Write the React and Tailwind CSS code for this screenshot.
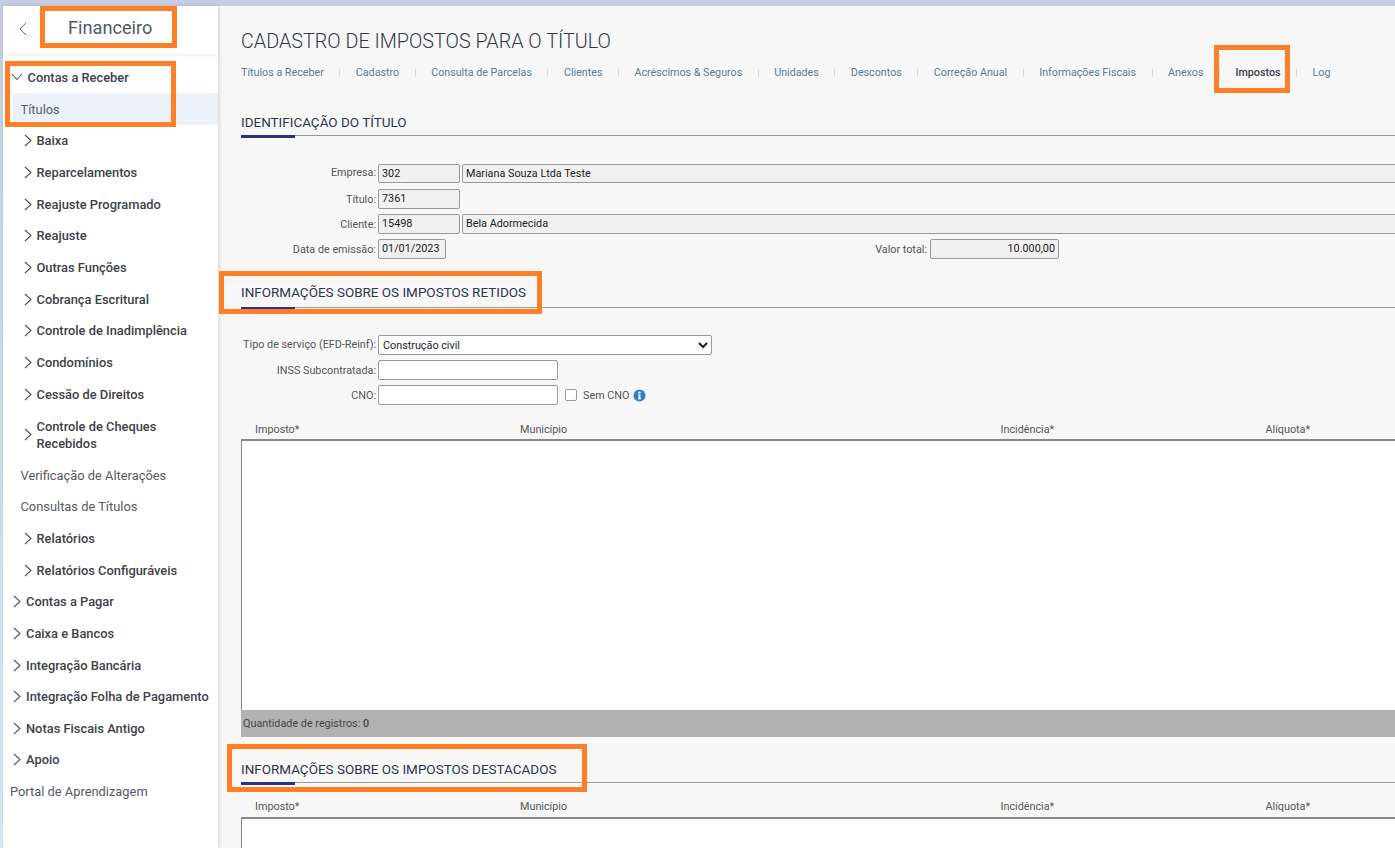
import { useState } from 'react'

const menu = [
  { label: 'Baixa', level: 2 },
  { label: 'Reparcelamentos', level: 2 },
  { label: 'Reajuste Programado', level: 2 },
  { label: 'Reajuste', level: 2 },
  { label: 'Outras Funções', level: 2 },
  { label: 'Cobrança Escritural', level: 2 },
  { label: 'Controle de Inadimplência', level: 2 },
  { label: 'Condomínios', level: 2 },
  { label: 'Cessão de Direitos', level: 2 },
  { label: 'Controle de Cheques Recebidos', level: 2, tall: true },
  { label: 'Verificação de Alterações', plain: 'sub' },
  { label: 'Consultas de Títulos', plain: 'sub' },
  { label: 'Relatórios', level: 2 },
  { label: 'Relatórios Configuráveis', level: 2 },
  { label: 'Contas a Pagar', level: 1 },
  { label: 'Caixa e Bancos', level: 1 },
  { label: 'Integração Bancária', level: 1 },
  { label: 'Integração Folha de Pagamento', level: 1 },
  { label: 'Notas Fiscais Antigo', level: 1 },
  { label: 'Apoio', level: 1 },
  { label: 'Portal de Aprendizagem', plain: 'top' },
]

const tabs = [
  'Títulos a Receber',
  'Cadastro',
  'Consulta de Parcelas',
  'Clientes',
  'Acréscimos & Seguros',
  'Unidades',
  'Descontos',
  'Correção Anual',
  'Informações Fiscais',
  'Anexos',
  'Impostos',
  'Log',
]

function ChevronRight() {
  return (
    <svg width="8" height="13" viewBox="0 0 8 13" fill="none" stroke="#555" strokeWidth="1.1" className="shrink-0">
      <path d="M1 1l6 5.5L1 12" />
    </svg>
  )
}

function MenuRow({ item }) {
  if (item.plain) {
    return (
      <div className={`flex h-[31.65px] items-center text-[12.87px] text-[#55595f] ${item.plain === 'sub' ? 'pl-[17.5px]' : 'pl-[7px]'}`}>
        {item.label}
      </div>
    )
  }
  return (
    <div className={`flex items-center font-medium text-[12.87px] leading-[17px] text-[#3f4148] ${item.tall ? 'h-[49.5px]' : 'h-[31.65px]'} ${item.level === 2 ? 'pl-[21px] gap-[4.5px]' : 'pl-[10px] gap-[5px]'}`}>
      <ChevronRight />
      <span>{item.label}</span>
    </div>
  )
}

function Sidebar() {
  return (
    <aside className="w-[215px] shrink-0 bg-white shadow-[1px_0_4px_rgba(0,0,0,0.15)] z-10">
      <div className="flex h-[48px] items-center pb-[4px] shadow-[0_2px_3px_rgba(0,0,0,0.06)]">
        <svg width="10" height="14" viewBox="0 0 10 14" fill="none" stroke="#666" strokeWidth="1" className="ml-[15px] mt-[2px] shrink-0">
          <path d="M8 1L2 7l6 6" />
        </svg>
        <span className="ml-[40px] text-[18.2px] text-[#4f5a68]">Financeiro</span>
      </div>
      <div className="pt-[7.4px]">
        <div className="flex h-[31.7px] items-center gap-[4.5px] pl-[8px] font-medium text-[12.87px] text-[#3f4148]">
          <svg width="12" height="8" viewBox="0 0 12 8" fill="none" stroke="#555" strokeWidth="1.1" className="shrink-0">
            <path d="M1 1l5 5.5L11 1" />
          </svg>
          <span>Contas a Receber</span>
        </div>
        <div className="ml-[10px] flex h-[32px] items-center bg-[#ebf2fa] pl-[7.5px] pt-[1px] text-[12.87px] text-[#5a6069]">Títulos</div>
        {menu.map((item) => (
          <MenuRow key={item.label} item={item} />
        ))}
      </div>
    </aside>
  )
}

function SectionTitle({ children, className }) {
  return (
    <div className={`relative border-b border-[#999] ${className}`}>
      <h2 className="text-[13.47px] leading-[20px] text-[#2f3450]">{children}</h2>
      <div className="absolute left-0 top-full h-[3px] w-[54px] bg-[#2b3089]" />
    </div>
  )
}

function Field({ value, className, align }) {
  return (
    <input
      readOnly
      value={value}
      className={`rounded-[2px] border border-[#999] bg-[#f0f0f0] px-[3px] text-[10.8px] text-[#222] outline-none ${align === 'right' ? 'text-right' : ''} ${className}`}
    />
  )
}

function Label({ children, className }) {
  return <label className={`w-[135px] shrink-0 whitespace-nowrap text-right text-[10.8px] text-[#555] ${className}`}>{children}</label>
}

function TableHead({ className }) {
  return (
    <div className={`flex h-[21px] items-center text-[10.8px] text-[#555] ${className}`}>
      <span className="ml-[14px] w-[265px]">Imposto*</span>
      <span className="w-[480.5px]">Município</span>
      <span className="w-[265px]">Incidência*</span>
      <span>Alíquota*</span>
    </div>
  )
}

export default function App() {
  const [semCno, setSemCno] = useState(false)
  return (
    <div className="relative flex h-screen w-screen overflow-hidden bg-linear-to-b from-[#c6cfe2] to-[#dae5f5] pt-[6px] pl-[3px] font-['Roboto',sans-serif]">
      <Sidebar />
      <main className="min-w-0 flex-1 overflow-hidden bg-[#f7f7f7] pl-[23px]">
        <div className="w-[1300px]">
          <h1 className="mt-[23px] text-[19.75px] font-light leading-[26px] text-[#33374a]">CADASTRO DE IMPOSTOS PARA O TÍTULO</h1>

          <nav className="mt-[8px] flex h-[20px] items-center text-[10.72px] text-[#5e7b8f]">
            {tabs.map((t, i) => (
              <div key={t} className="flex items-center">
                <span className={t === 'Impostos' ? 'font-medium text-[#3a3d4a]' : ''}>{t}</span>
                {i < tabs.length - 1 && <span className="mx-[15.5px] h-[8px] w-px bg-[#ddd]" />}
              </div>
            ))}
          </nav>

          <SectionTitle className="mt-[29px] pt-[1px] pb-[2px]">IDENTIFICAÇÃO DO TÍTULO</SectionTitle>

          <div className="mt-[28px] flex flex-col">
            <div className="flex items-center gap-[2px]">
              <Label>Empresa:</Label>
              <Field value="302" className="h-[19px] w-[82px]" />
              <Field value="Mariana Souza Ltda Teste" className="h-[19px] w-[960px]" />
            </div>
            <div className="mt-[6px] flex items-center gap-[2px]">
              <Label className="pt-[2px]">Título:</Label>
              <Field value="7361" className="h-[20px] w-[82px] pb-[2px]" />
            </div>
            <div className="mt-[5px] flex items-center gap-[2px]">
              <Label className="pt-[2px]">Cliente:</Label>
              <Field value="15498" className="h-[20px] w-[82px] pb-[2px]" />
              <Field value="Bela Adormecida" className="h-[20px] w-[960px] pb-[2px]" />
            </div>
            <div className="mt-[5px] flex items-center gap-[2px]">
              <Label className="pt-[2px]">Data de emissão:</Label>
              <Field value="01/01/2023" className="h-[20px] w-[68px] pb-[2px]" />
              <label className="w-[479px] pt-[2px] text-right text-[10.8px] text-[#555]">Valor total:</label>
              <Field value="10.000,00" align="right" className="ml-[1px] h-[20px] w-[129px] pb-[2px]" />
            </div>
          </div>

          <SectionTitle className="mt-[24px] pb-[4px]">INFORMAÇÕES SOBRE OS IMPOSTOS RETIDOS</SectionTitle>

          <div className="mt-[27px] flex flex-col gap-[5px]">
            <div className="flex items-center gap-[2px]">
              <Label>Tipo de serviço (EFD-Reinf):</Label>
              <select className="h-[20px] w-[334px] rounded-[2px] border border-[#999] bg-white text-[10.8px] text-[#222] outline-none" defaultValue="civil">
                <option value="civil">Construção civil</option>
              </select>
            </div>
            <div className="flex items-center gap-[2px]">
              <Label className="pt-[2px]">INSS Subcontratada:</Label>
              <input className="h-[20px] w-[180px] rounded-[2px] border border-[#999] bg-white" />
            </div>
            <div className="flex items-center gap-[2px]">
              <Label className="pt-[2px]">CNO:</Label>
              <input className="h-[20px] w-[180px] rounded-[2px] border border-[#999] bg-white" />
              <input
                type="checkbox"
                checked={semCno}
                onChange={(e) => setSemCno(e.target.checked)}
                className="ml-[5px] h-[12px] w-[12px] appearance-none rounded-[2px] border border-[#999] bg-white checked:bg-[#2f80c8]"
              />
              <span className="ml-[4px] pt-[2px] text-[10.8px] text-[#555]">Sem CNO</span>
              <svg width="13" height="13" viewBox="0 0 13 13" className="ml-[2px]">
                <circle cx="6.5" cy="6.5" r="6" fill="#2f80c8" />
                <circle cx="6.5" cy="3.6" r="1.2" fill="#fff" />
                <path d="M5 5.6h2.4v3.6h.8v1H4.9v-1h.8V6.6H5z" fill="#fff" />
              </svg>
            </div>
          </div>

          <div className="mt-[13px]">
            <TableHead className="pt-[4px]" />
            <div className="h-[271px] border-t-2 border-l border-[#888] bg-white" />
            <div className="flex h-[27px] items-center bg-[#b2b2b2] pl-[2px] pt-[1px] text-[10.8px] text-[#444]">
              Quantidade de registros:&nbsp;<span className="font-medium">0</span>
            </div>
          </div>

          <SectionTitle className="mt-[22px] pt-[1px] pb-[2px]">INFORMAÇÕES SOBRE OS IMPOSTOS DESTACADOS</SectionTitle>

          <div className="mt-[13px]">
            <TableHead className="pt-[2px]" />
            <div className="h-[60px] border-t-2 border-l border-[#888] bg-white" />
          </div>
        </div>
      </main>

      {/* marcações laranja por cima da tela */}
      <div className="absolute left-[40px] top-[6px] z-20 h-[42px] w-[137px] border-[5px] border-[#ff7f27]" />
      <div className="absolute left-[5px] top-[61px] z-20 h-[66px] w-[171px] border-[5px] border-[#ff7f27]" />
      <div className="absolute left-[1214px] top-[45px] z-20 h-[48px] w-[76px] border-[5px] border-[#ff7f27]" />
      <div className="absolute left-[219px] top-[271px] z-20 h-[43px] w-[323px] border-[5px] border-[#ff7f27]" />
      <div className="absolute left-[227px] top-[744px] z-20 h-[48px] w-[360px] border-[5px] border-[#ff7f27]" />
    </div>
  )
}
